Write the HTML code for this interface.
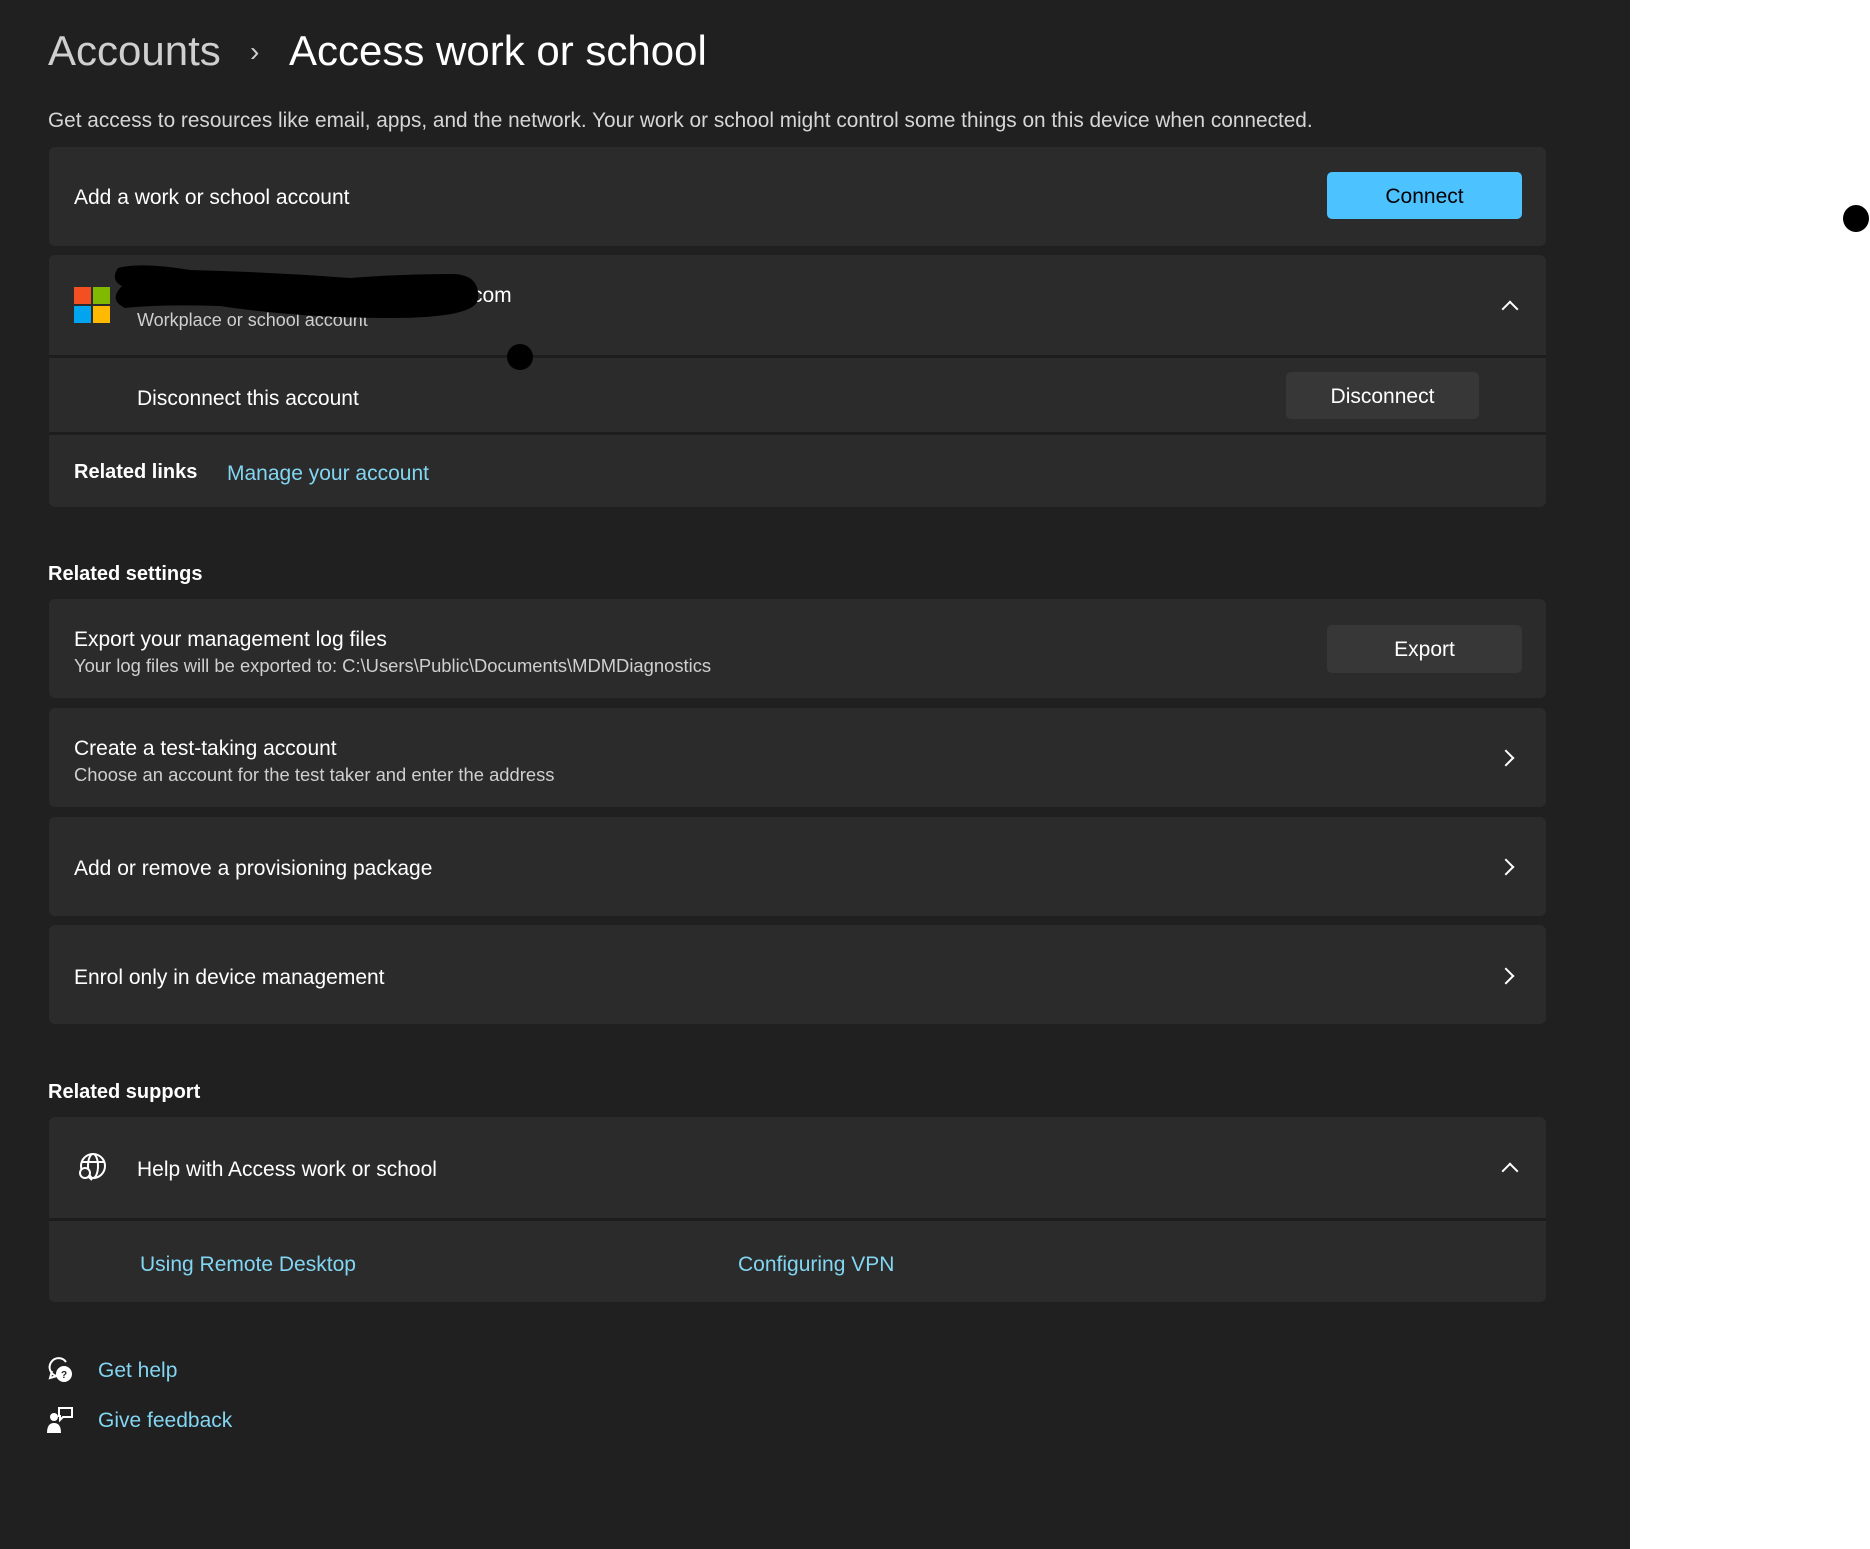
<!DOCTYPE html>
<html><head><meta charset="utf-8"><style>
*{margin:0;padding:0;box-sizing:border-box}
body{width:1870px;height:1549px;background:#fff;position:relative;overflow:hidden;font-family:"Liberation Sans",sans-serif;color:#fff}
#panel{position:absolute;left:0;top:0;width:1630px;height:1549px;background:#202020}
.a{position:absolute;white-space:nowrap}
.card{position:absolute;left:49px;width:1497px;background:#2b2b2b;border-radius:6px}
.t{font-size:21px;color:#fff}
.s{font-size:18.4px;color:#cfcfcf}
.h{font-size:20px;font-weight:bold}
.lnk{color:#82d6f2;font-size:21px}
.btn{position:absolute;border-radius:5px;background:#373737;color:#fff;font-size:21px;text-align:center}
.sep{position:absolute;left:49px;width:1497px;height:3px;background:#1d1d1d}
.chev{position:absolute;width:12px;height:12px;border-right:2px solid #fff;border-bottom:2px solid #fff}
</style></head><body>
<div id="panel"></div>
<div class="a" style="left:48px;top:27px;font-size:42px;color:#cfcfcf">Accounts</div>
<div class="a" style="left:250px;top:36px;font-size:28px;color:#cfcfcf">›</div>
<div class="a" style="left:289px;top:27px;font-size:42px">Access work or school</div>
<div class="a" style="left:48px;top:109px;font-size:20.8px;color:#d6d6d6">Get access to resources like email, apps, and the network. Your work or school might control some things on this device when connected.</div>

<div class="card" style="top:147px;height:99px"></div>
<div class="a t" style="left:74px;top:186px">Add a work or school account</div>
<div class="btn" style="left:1327px;top:172px;width:195px;height:47px;line-height:49px;background:#4cc2ff;color:#000">Connect</div>

<div class="card" style="top:255px;height:252px"></div>
<div class="a" style="left:74px;top:287px;width:17px;height:17px;background:#f25022"></div>
<div class="a" style="left:93px;top:287px;width:17px;height:17px;background:#7fba00"></div>
<div class="a" style="left:74px;top:306px;width:17px;height:17px;background:#00a4ef"></div>
<div class="a" style="left:93px;top:306px;width:17px;height:17px;background:#ffb900"></div>
<div class="a t" style="left:472px;top:284px">com</div>
<div class="a" style="left:137px;top:310px;font-size:18px;color:#cfcfcf">Workplace or school account</div>
<svg class="a" style="left:100px;top:260px" width="390" height="70"><path d="M150 44 Q230 52 320 54 L300 46 Q220 44 150 40Z" fill="#e31b1b"/><path d="M18 8 Q10 20 22 26 Q8 40 25 48 Q60 44 120 46 Q200 58 290 58 Q378 58 378 38 Q380 16 355 14 Q300 14 250 18 Q170 12 90 10 Q40 2 18 8Z" fill="#000"/></svg>
<div class="chev" style="left:1504px;top:303px;transform:rotate(-135deg)"></div>
<div class="sep" style="top:355px"></div>
<div class="a t" style="left:137px;top:387px">Disconnect this account</div>
<div class="btn" style="left:1286px;top:372px;width:193px;height:47px;line-height:49px">Disconnect</div>
<div class="sep" style="top:432px"></div>
<div class="a h" style="left:74px;top:461px">Related links</div>
<div class="a lnk" style="left:227px;top:462px">Manage your account</div>
<div class="a" style="left:507px;top:344px;width:26px;height:26px;border-radius:50%;background:#000"></div>

<div class="a h" style="left:48px;top:563px">Related settings</div>
<div class="card" style="top:599px;height:99px"></div>
<div class="a t" style="left:74px;top:628px">Export your management log files</div>
<div class="a s" style="left:74px;top:655px">Your log files will be exported to: C:\Users\Public\Documents\MDMDiagnostics</div>
<div class="btn" style="left:1327px;top:625px;width:195px;height:48px;line-height:50px">Export</div>

<div class="card" style="top:708px;height:99px"></div>
<div class="a t" style="left:74px;top:737px">Create a test-taking account</div>
<div class="a s" style="left:74px;top:764px">Choose an account for the test taker and enter the address</div>
<div class="chev" style="left:1500px;top:752px;transform:rotate(-45deg)"></div>

<div class="card" style="top:817px;height:99px"></div>
<div class="a t" style="left:74px;top:857px">Add or remove a provisioning package</div>
<div class="chev" style="left:1500px;top:861px;transform:rotate(-45deg)"></div>

<div class="card" style="top:925px;height:99px"></div>
<div class="a t" style="left:74px;top:966px">Enrol only in device management</div>
<div class="chev" style="left:1500px;top:970px;transform:rotate(-45deg)"></div>

<div class="a h" style="left:48px;top:1081px">Related support</div>
<div class="card" style="top:1117px;height:185px"></div>
<svg class="a" style="left:76px;top:1152px" width="32" height="32" fill="none" stroke="#fff" stroke-width="2"><circle cx="17" cy="14" r="12"/><ellipse cx="17" cy="14" rx="5" ry="12"/><path d="M5 10H29M6 18H12"/><circle cx="9" cy="21" r="5" fill="#2b2b2b"/><path d="M12.5 24.5L16 28"/></svg>
<div class="a t" style="left:137px;top:1158px">Help with Access work or school</div>
<div class="chev" style="left:1504px;top:1165px;transform:rotate(-135deg)"></div>
<div class="sep" style="top:1218px"></div>
<div class="a lnk" style="left:140px;top:1253px">Using Remote Desktop</div>
<div class="a lnk" style="left:738px;top:1253px">Configuring VPN</div>

<svg class="a" style="left:47px;top:1356px" width="28" height="28" fill="none" stroke="#fff" stroke-width="2"><path d="M10 20A9 9 0 1 1 19 6"/><path d="M10 20L3 22L5 15"/><circle cx="17" cy="18" r="7" fill="#fff"/><text x="14" y="22" font-size="10" font-weight="bold" fill="#202020" stroke="none" font-family="Liberation Sans">?</text></svg>
<div class="a lnk" style="left:98px;top:1359px">Get help</div>
<svg class="a" style="left:47px;top:1406px" width="28" height="28" fill="#fff"><circle cx="7" cy="11" r="4"/><path d="M0 27Q0 17 7 17Q14 17 14 27Z"/><path d="M12 2H25V11H16L13 14V10H12Z" fill="none" stroke="#fff" stroke-width="2"/></svg>
<div class="a lnk" style="left:98px;top:1409px">Give feedback</div>

<div class="a" style="left:1843px;top:205px;width:26px;height:27px;border-radius:50%;background:#000"></div>
</body></html>
